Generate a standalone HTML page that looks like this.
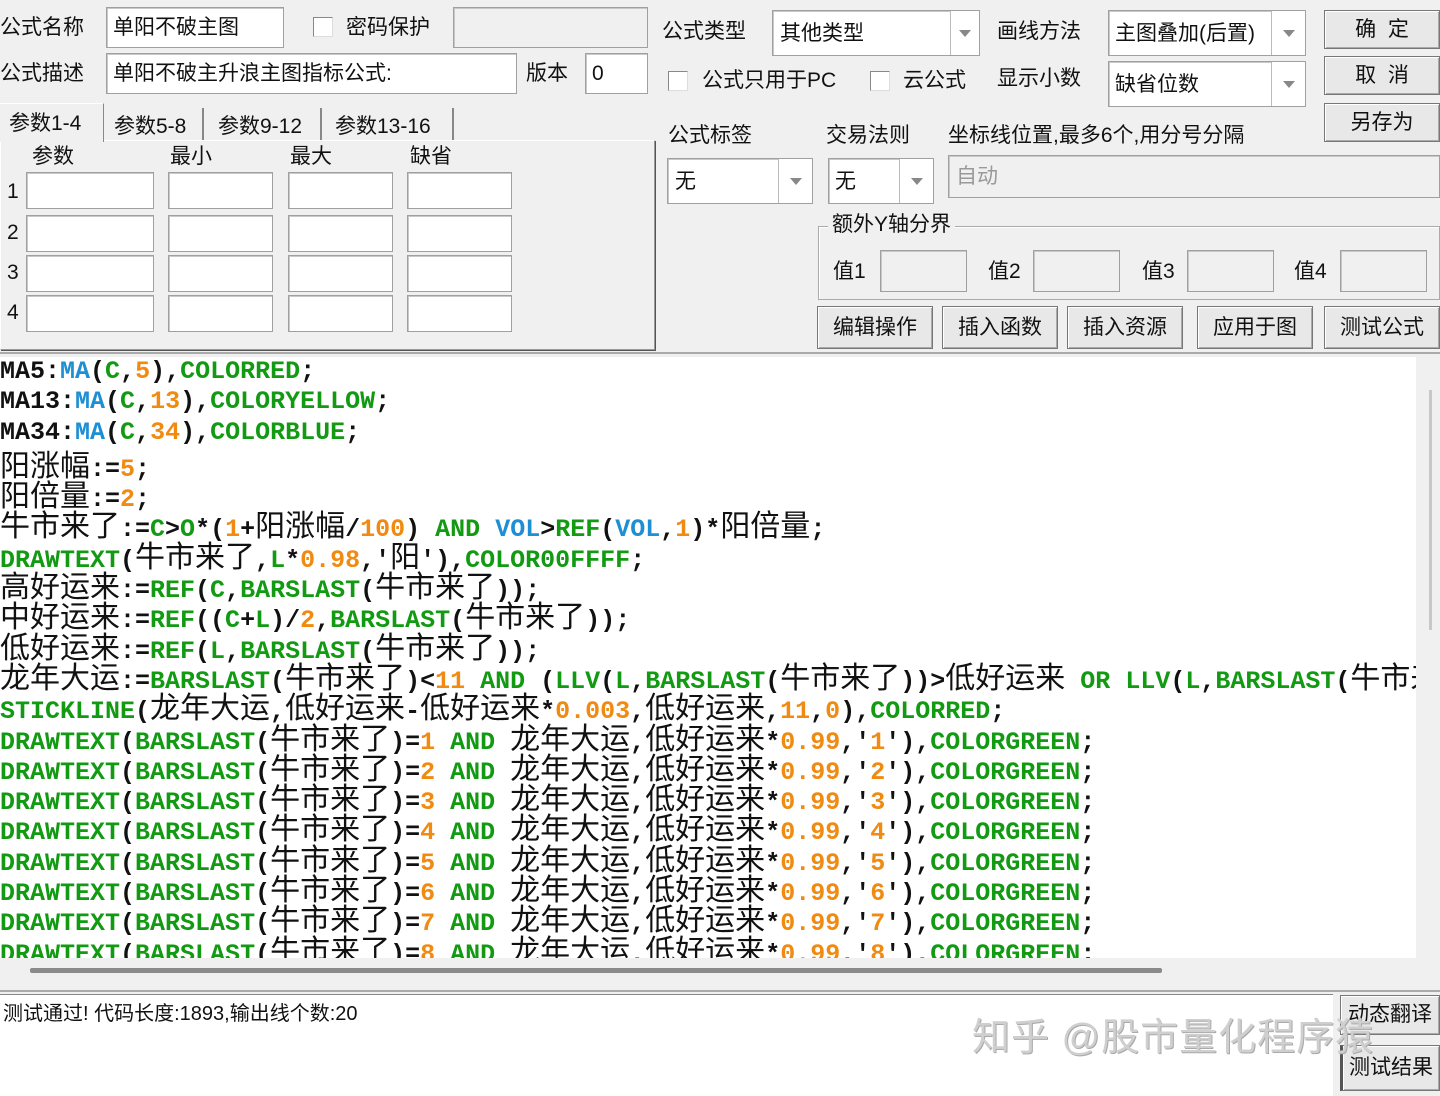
<!DOCTYPE html>
<html><head><meta charset="utf-8">
<style>
*{margin:0;padding:0;box-sizing:border-box}
body{width:1440px;height:1096px;background:#f0f0f0;position:relative;overflow:hidden;font-family:"Liberation Sans","Noto Sans CJK SC",sans-serif;font-size:21px;color:#111}
.a{position:absolute;white-space:nowrap}
.in{position:absolute;background:#fff;border:1px solid #a0a0a0;box-shadow:inset 1px 1px 0 #c8c8c8}
.ro{background:#f0f0f0}
.t{position:absolute;white-space:nowrap;line-height:1}
.cb{position:absolute;width:20px;height:20px;background:#fff;border:1px solid #888;border-right-color:#ddd;border-bottom-color:#ddd}
.dd{position:absolute;top:0;bottom:0;right:0;border-left:1px solid #bbb;background:#fff}
.dd:after{content:"";position:absolute;left:50%;top:50%;margin:-3px 0 0 -6px;border:6px solid transparent;border-top:7px solid #888;border-bottom:0}
.btn{position:absolute;background:#e8e8e8;border:1px solid #777;box-shadow:inset 1px 1px 0 #fff,inset -1px -1px 0 #aaa;text-align:center;font-size:21px}
#code{position:absolute;left:0;top:357px;width:1416px;height:601px;background:#fff;overflow:hidden;font-family:"Liberation Mono",monospace;font-weight:bold;font-size:25px;color:#111}
#code div{height:30.3px;line-height:30.3px;white-space:nowrap}
#code i{font-style:normal;font-weight:normal;font-family:"Noto Sans CJK SC",sans-serif;font-size:30px;line-height:30.3px;letter-spacing:0}
.g{color:#129a12}.b{color:#1d8fd3}.o{color:#f08a10}
</style></head><body>
<div class="t" style="left:0;top:17px">公式名称</div>
<div class="in" style="left:106px;top:7px;width:178px;height:41px"></div>
<div class="t" style="left:113px;top:17px">单阳不破主图</div>
<div class="cb" style="left:313px;top:17px"></div>
<div class="t" style="left:346px;top:17px">密码保护</div>
<div class="in ro" style="left:453px;top:7px;width:195px;height:41px"></div>
<div class="t" style="left:0;top:63px">公式描述</div>
<div class="in" style="left:106px;top:53px;width:411px;height:41px"></div>
<div class="t" style="left:113px;top:63px">单阳不破主升浪主图指标公式:</div>
<div class="t" style="left:526px;top:63px">版本</div>
<div class="in" style="left:585px;top:53px;width:63px;height:41px"></div>
<div class="t" style="left:592px;top:63px">0</div>
<div class="a" style="left:0;top:140px;width:655px;height:210px;border:1px solid #999;border-top-color:#fff;border-left-color:#fff;box-shadow:1px 1px 0 #555"></div>
<div class="a" style="left:0;top:103px;width:104px;height:39px;background:#f0f0f0;border-right:1px solid #888;border-top:1px solid #fff"></div>
<div class="t" style="left:9px;top:113px">参数1-4</div>
<div class="a" style="left:106px;top:108px;width:98px;height:32px;border-right:2px solid #888"></div>
<div class="t" style="left:114px;top:116px">参数5-8</div>
<div class="a" style="left:208px;top:108px;width:114px;height:32px;border-right:2px solid #888"></div>
<div class="t" style="left:218px;top:116px">参数9-12</div>
<div class="a" style="left:326px;top:108px;width:128px;height:32px;border-right:2px solid #888"></div>
<div class="t" style="left:335px;top:116px">参数13-16</div>
<div class="t" style="left:32px;top:146px">参数</div>
<div class="t" style="left:170px;top:146px">最小</div>
<div class="t" style="left:290px;top:146px">最大</div>
<div class="t" style="left:410px;top:146px">缺省</div>
<div class="t" style="left:7px;top:181px">1</div>
<div class="t" style="left:7px;top:222px">2</div>
<div class="t" style="left:7px;top:262px">3</div>
<div class="t" style="left:7px;top:302px">4</div>
<div class="in" style="left:26px;top:172px;width:128px;height:37px"></div><div class="in" style="left:168px;top:172px;width:105px;height:37px"></div><div class="in" style="left:288px;top:172px;width:105px;height:37px"></div><div class="in" style="left:407px;top:172px;width:105px;height:37px"></div>
<div class="in" style="left:26px;top:215px;width:128px;height:37px"></div><div class="in" style="left:168px;top:215px;width:105px;height:37px"></div><div class="in" style="left:288px;top:215px;width:105px;height:37px"></div><div class="in" style="left:407px;top:215px;width:105px;height:37px"></div>
<div class="in" style="left:26px;top:255px;width:128px;height:37px"></div><div class="in" style="left:168px;top:255px;width:105px;height:37px"></div><div class="in" style="left:288px;top:255px;width:105px;height:37px"></div><div class="in" style="left:407px;top:255px;width:105px;height:37px"></div>
<div class="in" style="left:26px;top:295px;width:128px;height:37px"></div><div class="in" style="left:168px;top:295px;width:105px;height:37px"></div><div class="in" style="left:288px;top:295px;width:105px;height:37px"></div><div class="in" style="left:407px;top:295px;width:105px;height:37px"></div>
<div class="t" style="left:662px;top:21px">公式类型</div>
<div class="in" style="left:772px;top:10px;width:208px;height:46px"><div class="dd" style="width:29px"></div></div>
<div class="t" style="left:780px;top:23px">其他类型</div>
<div class="t" style="left:997px;top:21px">画线方法</div>
<div class="in" style="left:1108px;top:10px;width:198px;height:46px"><div class="dd" style="width:34px"></div></div>
<div class="t" style="left:1115px;top:23px">主图叠加(后置)</div>
<div class="btn" style="left:1324px;top:10px;width:116px;height:39px;line-height:37px">确&nbsp;&nbsp;定</div>
<div class="btn" style="left:1324px;top:56px;width:116px;height:39px;line-height:37px">取&nbsp;&nbsp;消</div>
<div class="btn" style="left:1324px;top:103px;width:116px;height:39px;line-height:37px">另存为</div>
<div class="cb" style="left:668px;top:71px"></div>
<div class="t" style="left:702px;top:70px">公式只用于PC</div>
<div class="cb" style="left:870px;top:71px"></div>
<div class="t" style="left:903px;top:70px">云公式</div>
<div class="t" style="left:997px;top:68px">显示小数</div>
<div class="in" style="left:1108px;top:61px;width:198px;height:46px"><div class="dd" style="width:34px"></div></div>
<div class="t" style="left:1115px;top:74px">缺省位数</div>
<div class="t" style="left:668px;top:125px">公式标签</div>
<div class="t" style="left:826px;top:125px">交易法则</div>
<div class="t" style="left:948px;top:125px">坐标线位置,最多6个,用分号分隔</div>
<div class="in" style="left:667px;top:158px;width:146px;height:46px"><div class="dd" style="width:34px"></div></div>
<div class="t" style="left:675px;top:171px">无</div>
<div class="in" style="left:828px;top:158px;width:106px;height:46px"><div class="dd" style="width:34px"></div></div>
<div class="t" style="left:835px;top:171px">无</div>
<div class="in ro" style="left:948px;top:155px;width:492px;height:43px"></div>
<div class="t" style="left:956px;top:166px;color:#999">自动</div>
<div class="a" style="left:818px;top:226px;width:622px;height:74px;border:1px solid #aaa;box-shadow:inset 1px 1px 0 #fff"></div>
<div class="t" style="left:828px;top:214px;background:#f0f0f0;padding:0 4px">额外Y轴分界</div>
<div class="t" style="left:833px;top:261px">值1</div><div class="in ro" style="left:880px;top:250px;width:87px;height:42px"></div>
<div class="t" style="left:988px;top:261px">值2</div><div class="in ro" style="left:1033px;top:250px;width:87px;height:42px"></div>
<div class="t" style="left:1142px;top:261px">值3</div><div class="in ro" style="left:1187px;top:250px;width:87px;height:42px"></div>
<div class="t" style="left:1294px;top:261px">值4</div><div class="in ro" style="left:1340px;top:250px;width:87px;height:42px"></div>
<div class="btn" style="left:817px;top:306px;width:116px;height:43px;line-height:41px">编辑操作</div>
<div class="btn" style="left:942px;top:306px;width:116px;height:43px;line-height:41px">插入函数</div>
<div class="btn" style="left:1067px;top:306px;width:116px;height:43px;line-height:41px">插入资源</div>
<div class="btn" style="left:1197px;top:306px;width:116px;height:43px;line-height:41px">应用于图</div>
<div class="btn" style="left:1324px;top:306px;width:116px;height:43px;line-height:41px">测试公式</div>
<div class="a" style="left:0;top:352px;width:1440px;height:2px;background:#aaa"></div>
<div id="code">
<div>MA5:<span class="b">MA</span>(<span class="g">C</span>,<span class="o">5</span>),<span class="g">COLORRED</span>;</div>
<div>MA13:<span class="b">MA</span>(<span class="g">C</span>,<span class="o">13</span>),<span class="g">COLORYELLOW</span>;</div>
<div>MA34:<span class="b">MA</span>(<span class="g">C</span>,<span class="o">34</span>),<span class="g">COLORBLUE</span>;</div>
<div><i>阳涨幅</i>:=<span class="o">5</span>;</div>
<div><i>阳倍量</i>:=<span class="o">2</span>;</div>
<div><i>牛市来了</i>:=<span class="g">C</span>&gt;<span class="g">O</span>*(<span class="o">1</span>+<i>阳涨幅</i>/<span class="o">100</span>) <span class="g">AND</span> <span class="b">VOL</span>&gt;<span class="g">REF</span>(<span class="b">VOL</span>,<span class="o">1</span>)*<i>阳倍量</i>;</div>
<div><span class="g">DRAWTEXT</span>(<i>牛市来了</i>,<span class="g">L</span>*<span class="o">0.98</span>,'<i>阳</i>'),<span class="g">COLOR00FFFF</span>;</div>
<div><i>高好运来</i>:=<span class="g">REF</span>(<span class="g">C</span>,<span class="g">BARSLAST</span>(<i>牛市来了</i>));</div>
<div><i>中好运来</i>:=<span class="g">REF</span>((<span class="g">C</span>+<span class="g">L</span>)/<span class="o">2</span>,<span class="g">BARSLAST</span>(<i>牛市来了</i>));</div>
<div><i>低好运来</i>:=<span class="g">REF</span>(<span class="g">L</span>,<span class="g">BARSLAST</span>(<i>牛市来了</i>));</div>
<div><i>龙年大运</i>:=<span class="g">BARSLAST</span>(<i>牛市来了</i>)&lt;<span class="o">11</span> <span class="g">AND</span> (<span class="g">LLV</span>(<span class="g">L</span>,<span class="g">BARSLAST</span>(<i>牛市来了</i>))&gt;<i>低好运来</i> <span class="g">OR</span> <span class="g">LLV</span>(<span class="g">L</span>,<span class="g">BARSLAST</span>(<i>牛市来了</i>))</div>
<div><span class="g">STICKLINE</span>(<i>龙年大运</i>,<i>低好运来</i>-<i>低好运来</i>*<span class="o">0.003</span>,<i>低好运来</i>,<span class="o">11</span>,<span class="o">0</span>),<span class="g">COLORRED</span>;</div>
<div><span class="g">DRAWTEXT</span>(<span class="g">BARSLAST</span>(<i>牛市来了</i>)=<span class="o">1</span> <span class="g">AND</span> <i>龙年大运</i>,<i>低好运来</i>*<span class="o">0.99</span>,'<span class="o">1</span>'),<span class="g">COLORGREEN</span>;</div>
<div><span class="g">DRAWTEXT</span>(<span class="g">BARSLAST</span>(<i>牛市来了</i>)=<span class="o">2</span> <span class="g">AND</span> <i>龙年大运</i>,<i>低好运来</i>*<span class="o">0.99</span>,'<span class="o">2</span>'),<span class="g">COLORGREEN</span>;</div>
<div><span class="g">DRAWTEXT</span>(<span class="g">BARSLAST</span>(<i>牛市来了</i>)=<span class="o">3</span> <span class="g">AND</span> <i>龙年大运</i>,<i>低好运来</i>*<span class="o">0.99</span>,'<span class="o">3</span>'),<span class="g">COLORGREEN</span>;</div>
<div><span class="g">DRAWTEXT</span>(<span class="g">BARSLAST</span>(<i>牛市来了</i>)=<span class="o">4</span> <span class="g">AND</span> <i>龙年大运</i>,<i>低好运来</i>*<span class="o">0.99</span>,'<span class="o">4</span>'),<span class="g">COLORGREEN</span>;</div>
<div><span class="g">DRAWTEXT</span>(<span class="g">BARSLAST</span>(<i>牛市来了</i>)=<span class="o">5</span> <span class="g">AND</span> <i>龙年大运</i>,<i>低好运来</i>*<span class="o">0.99</span>,'<span class="o">5</span>'),<span class="g">COLORGREEN</span>;</div>
<div><span class="g">DRAWTEXT</span>(<span class="g">BARSLAST</span>(<i>牛市来了</i>)=<span class="o">6</span> <span class="g">AND</span> <i>龙年大运</i>,<i>低好运来</i>*<span class="o">0.99</span>,'<span class="o">6</span>'),<span class="g">COLORGREEN</span>;</div>
<div><span class="g">DRAWTEXT</span>(<span class="g">BARSLAST</span>(<i>牛市来了</i>)=<span class="o">7</span> <span class="g">AND</span> <i>龙年大运</i>,<i>低好运来</i>*<span class="o">0.99</span>,'<span class="o">7</span>'),<span class="g">COLORGREEN</span>;</div>
<div><span class="g">DRAWTEXT</span>(<span class="g">BARSLAST</span>(<i>牛市来了</i>)=<span class="o">8</span> <span class="g">AND</span> <i>龙年大运</i>,<i>低好运来</i>*<span class="o">0.99</span>,'<span class="o">8</span>'),<span class="g">COLORGREEN</span>;</div>
</div>
<div class="a" style="left:1416px;top:356px;width:24px;height:602px;background:#f0f0f0"></div>
<div class="a" style="left:1429px;top:390px;width:3px;height:240px;background:#c8c8c8"></div>
<div class="a" style="left:30px;top:968px;width:1132px;height:5px;background:#8a8a8a;border-radius:2px"></div>
<div class="a" style="left:0;top:990px;width:1440px;height:2px;background:#aaa"></div>
<div class="a" style="left:0;top:994px;width:1333px;height:102px;background:#fff;border-top:1px solid #888"></div>
<div class="t" style="left:3px;top:1004px;font-size:20px">测试通过! 代码长度:1893,输出线个数:20</div>
<div class="btn" style="left:1340px;top:995px;width:100px;height:40px;line-height:38px">动态翻译</div>
<div class="btn" style="left:1340px;top:1045px;width:100px;height:46px;line-height:44px;border-left:3px solid #555">测试结果</div>
<div class="t" style="left:972px;top:1019px;font-size:38px;color:#cfcfcf;letter-spacing:1px;text-shadow:1px 1px 0 #aaa">知乎 @股市量化程序猿</div>
</body></html>
